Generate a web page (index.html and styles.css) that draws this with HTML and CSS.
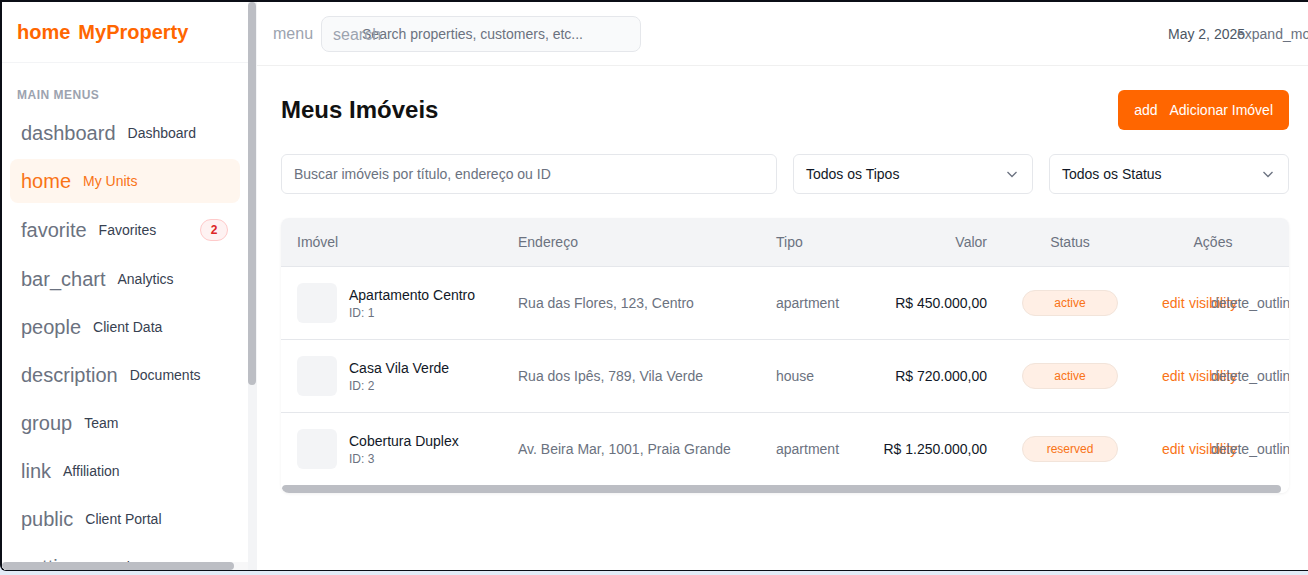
FILE: index.html
```html
<!DOCTYPE html>
<html lang="pt-BR">
<head>
<meta charset="utf-8">
<title>MyProperty - Meus Imóveis</title>
<link rel="stylesheet" href="styles.css">
</head>
<body>
<div class="frame">
  <aside class="sidebar">
    <div class="sidebar-main">
      <div class="sidebar-scroll">
        <div class="brand"><span class="brand-icon">home</span><span>MyProperty</span></div>
        <nav class="nav">
          <div class="nav-title">MAIN MENUS</div>
          <a class="nav-item"><span class="nav-icon">dashboard</span><span class="nav-label">Dashboard</span></a>
          <a class="nav-item active"><span class="nav-icon">home</span><span class="nav-label">My Units</span></a>
          <a class="nav-item"><span class="nav-icon">favorite</span><span class="nav-label">Favorites</span><span class="badge">2</span></a>
          <a class="nav-item"><span class="nav-icon">bar_chart</span><span class="nav-label">Analytics</span></a>
          <a class="nav-item"><span class="nav-icon">people</span><span class="nav-label">Client Data</span></a>
          <a class="nav-item"><span class="nav-icon">description</span><span class="nav-label">Documents</span></a>
          <a class="nav-item"><span class="nav-icon">group</span><span class="nav-label">Team</span></a>
          <a class="nav-item"><span class="nav-icon">link</span><span class="nav-label">Affiliation</span></a>
          <a class="nav-item"><span class="nav-icon">public</span><span class="nav-label">Client Portal</span></a>
          <a class="nav-item"><span class="nav-icon">settings</span><span class="nav-label">Settings</span></a>
          <a class="nav-item"><span class="nav-icon">help_outline</span><span class="nav-label">Help</span></a>
          <a class="nav-item"><span class="nav-icon">logout</span><span class="nav-label">Logout</span></a>
        </nav>
      </div>
      <div class="vscroll"><div class="vthumb"></div></div>
    </div>
    <div class="hscroll"><div class="hthumb"></div><div class="hcorner"></div></div>
  </aside>
  <main class="main">
    <header class="topbar">
      <span class="menu-icon">menu</span>
      <div class="top-search">
        <input class="top-search-input" type="text" placeholder="Search properties, customers, etc...">
        <span class="top-search-icon">search</span>
      </div>
      <div class="topbar-right">
        <span class="date">May 2, 2025</span>
        <span class="expand">expand_more</span>
      </div>
    </header>
    <section class="content">
      <div class="title-row">
        <h1 class="page-title">Meus Imóveis</h1>
        <button class="btn-add"><span>add</span><span>Adicionar Imóvel</span></button>
      </div>
      <div class="filters">
        <input class="filter-search" type="text" placeholder="Buscar imóveis por título, endereço ou ID">
        <div class="select"><span>Todos os Tipos</span>
          <svg width="12" height="12" viewBox="0 0 12 12"><path d="M1.5 4 L6 8.5 L10.5 4" fill="none" stroke="#6b7280" stroke-width="1.3"/></svg>
        </div>
        <div class="select"><span>Todos os Status</span>
          <svg width="12" height="12" viewBox="0 0 12 12"><path d="M1.5 4 L6 8.5 L10.5 4" fill="none" stroke="#6b7280" stroke-width="1.3"/></svg>
        </div>
      </div>
      <div class="card">
        <div class="table-wrap">
          <table class="table">
            <colgroup>
              <col class="c-prop"><col class="c-addr"><col class="c-type"><col class="c-val"><col class="c-status"><col class="c-act">
            </colgroup>
            <thead>
              <tr>
                <th>Imóvel</th>
                <th>Endereço</th>
                <th>Tipo</th>
                <th class="right">Valor</th>
                <th class="center">Status</th>
                <th class="center">Ações</th>
              </tr>
            </thead>
            <tbody>
              <tr>
                <td><div class="prop"><div class="thumb"></div><div><div class="prop-name">Apartamento Centro</div><div class="prop-id">ID: 1</div></div></div></td>
                <td>Rua das Flores, 123, Centro</td>
                <td>apartment</td>
                <td class="right value">R$ 450.000,00</td>
                <td class="center"><span class="pill">active</span></td>
                <td><div class="actions"><span class="act act-edit">edit</span><span class="act act-view">visibility</span><span class="act act-del">delete_outline</span></div></td>
              </tr>
              <tr>
                <td><div class="prop"><div class="thumb"></div><div><div class="prop-name">Casa Vila Verde</div><div class="prop-id">ID: 2</div></div></div></td>
                <td>Rua dos Ipês, 789, Vila Verde</td>
                <td>house</td>
                <td class="right value">R$ 720.000,00</td>
                <td class="center"><span class="pill">active</span></td>
                <td><div class="actions"><span class="act act-edit">edit</span><span class="act act-view">visibility</span><span class="act act-del">delete_outline</span></div></td>
              </tr>
              <tr>
                <td><div class="prop"><div class="thumb"></div><div><div class="prop-name">Cobertura Duplex</div><div class="prop-id">ID: 3</div></div></div></td>
                <td>Av. Beira Mar, 1001, Praia Grande</td>
                <td>apartment</td>
                <td class="right value">R$ 1.250.000,00</td>
                <td class="center"><span class="pill">reserved</span></td>
                <td><div class="actions"><span class="act act-edit">edit</span><span class="act act-view">visibility</span><span class="act act-del">delete_outline</span></div></td>
              </tr>
            </tbody>
          </table>
        </div>
        <div class="card-scroll"><div class="card-thumb"></div></div>
      </div>
    </section>
  </main>
</div>
</body>
</html>
```
FILE: styles.css
```css
* { box-sizing: border-box; }

html, body {
  margin: 0;
  padding: 0;
}

body {
  width: 1308px;
  height: 575px;
  overflow: hidden;
  background: linear-gradient(180deg, #cfdcee 0%, #e3ecf7 100%);
  font-family: "Liberation Sans", Arial, sans-serif;
  color: #111827;
}

.frame {
  display: flex;
  width: 1308px;
  height: 571px;
  border-top: 2px solid #0b0e16;
  border-left: 2px solid #0b0e16;
  border-bottom: 1px solid #0b0e16;
  border-bottom-left-radius: 6px;
  background: #ffffff;
  overflow: hidden;
}

/* Sidebar */
.sidebar {
  flex: 0 0 255px;
  width: 255px;
  height: 100%;
  display: flex;
  flex-direction: column;
  background: #ffffff;
  border-right: 1px solid #f3f4f6;
}

.sidebar-main {
  flex: 1;
  min-height: 0;
  display: flex;
}

.sidebar-scroll {
  flex: 1;
  min-width: 0;
  overflow: hidden;
}

.vscroll {
  flex: 0 0 8px;
  width: 8px;
  background: #f3f4f6;
}

.vthumb {
  width: 8px;
  height: 383px;
  border-radius: 4px;
  background: #bcbec4;
}

.hscroll {
  flex: 0 0 8px;
  height: 8px;
  display: flex;
  background: #f7f7f8;
}

.hthumb {
  width: 232px;
  height: 8px;
  border-radius: 4px;
  background: #bcbec4;
}

.hcorner {
  margin-left: auto;
  width: 8px;
  height: 8px;
  background: #f3f4f6;
}

.brand {
  height: 61px;
  display: flex;
  align-items: center;
  padding: 0 15px;
  border-bottom: 1px solid #f3f4f6;
  font-size: 20px;
  font-weight: bold;
  color: #ff6600;
  white-space: nowrap;
}

.brand-icon { margin-right: 8px; }

.nav {
  padding: 24px 8px 24px 8px;
}

.nav-title {
  padding-left: 7px;
  height: 16px;
  line-height: 16px;
  margin-bottom: 8px;
  font-size: 12px;
  font-weight: bold;
  letter-spacing: 0.5px;
  color: #9ca3af;
}

.nav-item {
  display: flex;
  align-items: center;
  padding: 12px 12px 12px 11px;
  margin-bottom: 4px;
  border-radius: 8px;
  white-space: nowrap;
  cursor: pointer;
}

.nav-icon {
  font-size: 20px;
  line-height: 20px;
  color: #6b7280;
  margin-right: 12px;
}

.nav-label {
  font-size: 14px;
  line-height: 20px;
  color: #374151;
}

.nav-item.active { background: #fff6ee; }
.nav-item.active .nav-icon,
.nav-item.active .nav-label { color: #f97316; }

.badge {
  margin-left: auto;
  min-width: 28px;
  height: 22px;
  line-height: 20px;
  border: 1px solid #fecaca;
  background: #fef2f2;
  color: #dc2626;
  font-size: 12px;
  font-weight: bold;
  text-align: center;
  border-radius: 11px;
}

/* Main */
.main {
  flex: 1;
  min-width: 0;
  display: flex;
  flex-direction: column;
  overflow: hidden;
  background: #ffffff;
}

.topbar {
  flex: 0 0 64px;
  height: 64px;
  display: flex;
  align-items: center;
  padding: 0 24px 0 16px;
  border-bottom: 1px solid #f0f0f0;
}

.menu-icon {
  font-size: 16px;
  color: #9ca3af;
  margin-right: 8px;
}

.top-search {
  position: relative;
  width: 320px;
  height: 36px;
  margin-top: 1px;
}

.top-search-input {
  width: 100%;
  height: 100%;
  border: 1px solid #e5e7eb;
  border-radius: 8px;
  background: #f9fafb;
  padding: 0 12px 0 40px;
  font-family: "Liberation Sans", Arial, sans-serif;
  font-size: 14px;
  color: #374151;
  outline: none;
}

.top-search-input::placeholder { color: #6b7280; }

.top-search-icon {
  position: absolute;
  left: 12px;
  top: 9px;
  font-size: 16px;
  line-height: 20px;
  color: #9ca3af;
  pointer-events: none;
}

.topbar-right {
  margin-left: auto;
  display: flex;
  align-items: center;
  white-space: nowrap;
}

.date {
  width: 69px;
  font-size: 14px;
  color: #4b5563;
}

.expand {
  width: 47px;
  font-size: 14px;
  color: #6b7280;
}

.content {
  padding: 24px 19px 0 24px;
}

.title-row {
  display: flex;
  align-items: center;
  justify-content: space-between;
  height: 40px;
  margin-bottom: 24px;
}

.page-title {
  margin: 0;
  font-size: 24px;
  font-weight: bold;
  color: #111111;
}

.btn-add {
  display: flex;
  align-items: center;
  gap: 12px;
  height: 40px;
  padding: 0 16px;
  border: none;
  border-radius: 6px;
  background: #ff6600;
  color: #ffffff;
  font-family: "Liberation Sans", Arial, sans-serif;
  font-size: 14px;
  cursor: pointer;
}

.filters {
  display: flex;
  gap: 16px;
  height: 40px;
  margin-bottom: 24px;
}

.filter-search {
  flex: 1;
  height: 40px;
  border: 1px solid #e5e7eb;
  border-radius: 6px;
  padding: 0 12px;
  font-family: "Liberation Sans", Arial, sans-serif;
  font-size: 14px;
  color: #111827;
  outline: none;
}

.filter-search::placeholder { color: #6b7280; }

.select {
  width: 240px;
  height: 40px;
  display: flex;
  align-items: center;
  justify-content: space-between;
  padding: 0 14px 0 12px;
  border: 1px solid #e5e7eb;
  border-radius: 6px;
  font-size: 14px;
  color: #111827;
}

.card {
  background: #ffffff;
  border-radius: 8px;
  overflow: hidden;
  box-shadow: 0 1px 3px rgba(0, 0, 0, 0.06);
}

.table-wrap { overflow: hidden; }

.card-scroll {
  height: 8px;
  padding-left: 1px;
  background: #ffffff;
}

.card-thumb {
  width: 999px;
  height: 8px;
  border-radius: 4px;
  background: #bcbec4;
}

.table {
  width: 1008px;
  table-layout: fixed;
  border-collapse: separate;
  border-spacing: 0;
  font-size: 14px;
}

.c-prop { width: 221px; }
.c-addr { width: 258px; }
.c-type { width: 100px; }
.c-val { width: 143px; }
.c-status { width: 134px; }
.c-act { width: 152px; }

.table th {
  background: #f3f4f6;
  padding: 14px 16px;
  line-height: 20px;
  font-weight: normal;
  color: #6b7280;
  text-align: left;
  white-space: nowrap;
}

.table td {
  padding: 16px;
  line-height: 20px;
  border-top: 1px solid #e5e7eb;
  color: #6b7280;
  vertical-align: middle;
  white-space: nowrap;
}

.table .right { text-align: right; }
.table .center { text-align: center; }
.table td.value { color: #111827; }

.prop {
  display: flex;
  align-items: center;
  gap: 12px;
}

.thumb {
  width: 40px;
  height: 40px;
  flex: 0 0 40px;
  border-radius: 6px;
  background: #f3f4f6;
}

.prop-name {
  font-size: 14px;
  line-height: 20px;
  color: #111827;
}

.prop-id {
  font-size: 12px;
  line-height: 16px;
  color: #6b7280;
}

.pill {
  display: inline-block;
  width: 96px;
  height: 26px;
  line-height: 24px;
  border: 1px solid #f2e4da;
  border-radius: 13px;
  background: #ffefe5;
  color: #f97316;
  font-size: 12px;
  text-align: center;
}

.actions {
  display: flex;
  justify-content: center;
  gap: 4px;
}

.act {
  font-size: 14px;
  line-height: 20px;
  white-space: nowrap;
}

.act-edit { width: 23px; flex: 0 0 23px; color: #f97316; }
.act-view { width: 18px; flex: 0 0 18px; color: #f97316; }
.act-del { width: 53px; flex: 0 0 53px; color: #6b7280; }
```
